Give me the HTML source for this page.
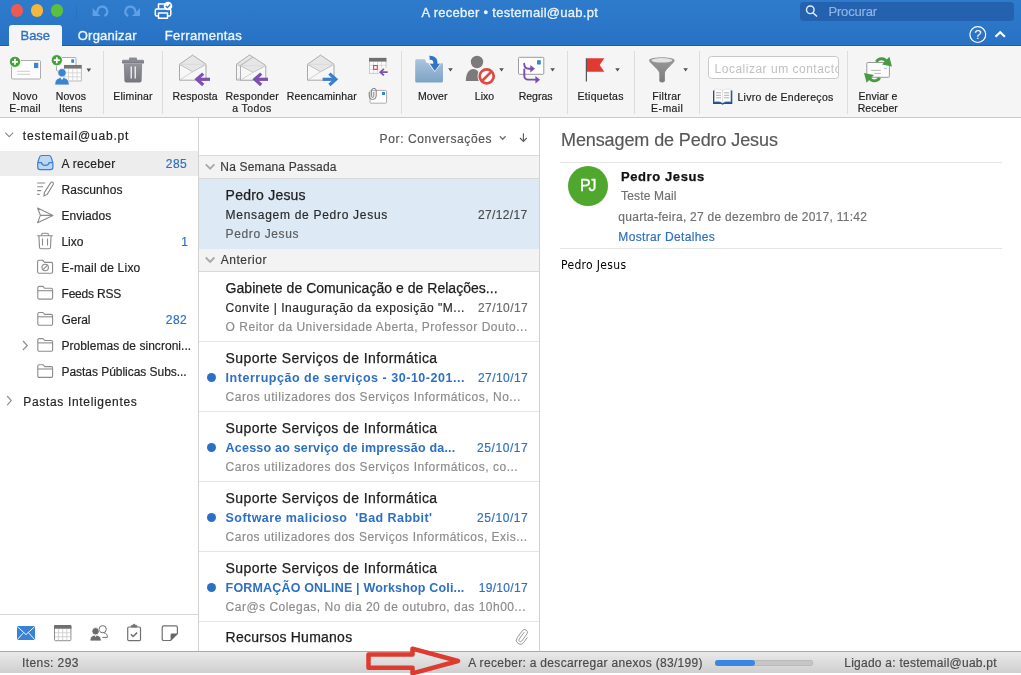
<!DOCTYPE html>
<html><head><meta charset="utf-8">
<style>
*{box-sizing:border-box;margin:0;padding:0}
html,body{width:1021px;height:675px;overflow:hidden;background:#fff}
body{font-family:"Liberation Sans",sans-serif;font-size:13px;color:#222;position:relative}
.abs{position:absolute}
.t{position:absolute;white-space:pre}
#tx{position:absolute;left:0;top:0;width:1021px;height:675px;will-change:transform}
#title{left:0;top:0;width:1021px;height:46px;background:linear-gradient(#2e7bcc,#2872c4);border-bottom:1px solid #1f5ca6}
#ribbon{left:0;top:46px;width:1021px;height:72px;background:#f5f5f5;border-bottom:1px solid #c9c9c9}
.tl{position:absolute;border-radius:50%;width:12.5px;height:12.5px;top:4px}
#tabbase{left:9px;top:25px;width:53px;height:22px;background:#f5f5f5;border-radius:3px 3px 0 0}
.sep{position:absolute;top:51px;width:1px;height:63px;background:#dddddd}
#side{left:0;top:118px;width:199px;height:533px;background:#fff;border-right:1px solid #d2d2d2}
#list{left:199px;top:118px;width:341px;height:533px;background:#fff;border-right:1px solid #d2d2d2}
.grp{position:absolute;left:199px;width:340px;background:#f3f3f3}
.hl{position:absolute;left:199px;width:340px;height:1px;background:#e5e5e5}
.dot{position:absolute;left:206.5px;width:9px;height:9px;border-radius:50%;background:#2c70c6}
#status{left:0;top:651px;width:1021px;height:22px;background:linear-gradient(#e9e9e9,#cfcfcf);border-top:1px solid #a8a8a8}
</style></head><body>
<div id="title" class="abs">
 <div class="tl" style="left:10.8px;background:#ee5a52"></div>
 <div class="tl" style="left:30.8px;background:#f5b73b"></div>
 <div class="tl" style="left:50.8px;background:#5bc13a"></div>
 <div class="abs" style="left:800px;top:1.5px;width:214px;height:19.5px;background:#2462b0;border-radius:3.5px"></div>
 <div id="tabbase" class="abs"></div>
</div>
<div id="ribbon" class="abs"></div>
<div class="sep" style="left:103px"></div><div class="sep" style="left:162px"></div><div class="sep" style="left:401px"></div><div class="sep" style="left:567px"></div><div class="sep" style="left:634px"></div><div class="sep" style="left:699px"></div><div class="sep" style="left:847px"></div>
<div class="abs" style="left:708px;top:55.5px;width:130.5px;height:23px;border:1px solid #c9c9c9;border-radius:3.5px;background:#fff"></div>
<div id="side" class="abs"></div>
<div id="list" class="abs"></div>
<div class="abs" style="left:0;top:150.5px;width:198px;height:25.5px;background:#ededed"></div>
<div class="abs" style="left:0;top:614px;width:198px;height:1px;background:#d6d6d6"></div>
<!-- list structure -->
<div class="hl" style="top:155px;background:#d9d9d9"></div>
<div class="grp" style="top:156px;height:22px"></div>
<div class="hl" style="top:178px;background:#d9d9d9"></div>
<div class="abs" style="left:199px;top:179px;width:340px;height:69.500px;background:#ddeaf6"></div>
<div class="grp" style="top:249px;height:22.500px"></div>
<div class="hl" style="top:271px;background:#d9d9d9"></div>
<div class="hl" style="top:341px"></div><div class="hl" style="top:411px"></div><div class="hl" style="top:481px"></div><div class="hl" style="top:551px"></div><div class="hl" style="top:621px"></div>
<div class="dot" style="top:373px"></div><div class="dot" style="top:443px"></div><div class="dot" style="top:513px"></div><div class="dot" style="top:583px"></div>
<!-- reading pane -->
<div class="abs" style="left:560px;top:162px;width:442px;height:1px;background:#e4e4e4"></div>
<div class="abs" style="left:560px;top:248px;width:442px;height:1px;background:#e4e4e4"></div>
<div class="abs" style="left:567.600px;top:165.700px;width:40.600px;height:40.600px;border-radius:50%;background:#4fa72d"></div>
<div id="status" class="abs">
 <div class="abs" style="left:715px;top:7.500px;width:98px;height:6px;border-radius:3px;background:#c6c6c6;box-shadow:inset 0 0 0 0.5px #b0b0b0"></div>
 <div class="abs" style="left:715px;top:7.500px;width:40px;height:6px;border-radius:3px;background:#3b86e2"></div>
</div>
<svg class="abs" style="left:0;top:0" width="1021" height="118" viewBox="0 0 1021 118">
<defs>
 <linearGradient id="gTrash" x1="0" y1="0" x2="0" y2="1"><stop offset="0" stop-color="#94949c"/><stop offset="1" stop-color="#76767e"/></linearGradient>
 <linearGradient id="gFold" x1="0" y1="0" x2="0" y2="1"><stop offset="0" stop-color="#a9c4de"/><stop offset="1" stop-color="#7da2c6"/></linearGradient>
 <linearGradient id="gFun" x1="0" y1="0" x2="0" y2="1"><stop offset="0" stop-color="#9a9a9a"/><stop offset="1" stop-color="#7c7c7c"/></linearGradient>
 <g id="envopen">
  <path d="M0.5 9.2 L13.6 0 L27 9.2 V25 H0.5 Z" fill="#f7f7f7" stroke="#a8a8a8" stroke-width="1" stroke-linejoin="round"/>
  <path d="M0.5 9.2 L13.6 0 L27 9.2 L13.6 16.5 Z" fill="#e6e6e6" stroke="#b4b4b4" stroke-width="0.8" stroke-linejoin="round"/>
  <path d="M0.5 9.2 H27" stroke="#d6d6d6" stroke-width="0.7"/>
  <path d="M0.8 24.8 L13.6 16.5" stroke="#c4c4c4" stroke-width="0.8"/>
 </g>
 <g id="arrL"><path d="M15 6.3 H2.5" stroke-width="3.2" fill="none"/><path d="M8.2 0.6 L1.8 6.3 L8.2 12" stroke-width="3.2" fill="none" stroke-linejoin="miter"/></g>
 <path id="dd" d="M0 0 h4.6 l-2.3 3.4 z" fill="#505050"/>
</defs>
<!-- title bar icons -->
<g fill="none" stroke="#5e9fe6" stroke-width="2.3">
 <path d="M104.4 15.9 A4.9 4.9 0 1 0 97.4 11.5 L96.5 13"/>
 <path d="M128.2 15.9 A4.9 4.9 0 1 1 135.2 11.5 L136.1 13"/>
</g>
<path d="M92.6 8.1 V16 H100.5 z" fill="#5e9fe6"/>
<path d="M140 8.1 V16 H132.1 z" fill="#5e9fe6"/>
<path d="M76.5 6 v13" stroke="#2a6dc0" stroke-width="0.8"/>
<!-- printer -->
<g fill="none" stroke="#fff" stroke-width="1.5" stroke-linejoin="round">
 <path d="M158.5 9 V4 h7"/>
 <rect x="155.3" y="9" width="15.5" height="7" rx="1.5"/>
 <rect x="158.5" y="13" width="9" height="5.3" fill="#2c74cb"/>
</g>
<circle cx="168" cy="6" r="4.3" fill="#fff"/>
<path d="M165.8 6 l1.6 1.7 l2.9 -3.2" fill="none" stroke="#2c74cb" stroke-width="1.2"/>
<!-- search -->
<circle cx="810.3" cy="9.8" r="3.8" fill="none" stroke="#e4eefa" stroke-width="1.4"/>
<path d="M813 12.7 l4 3.8" stroke="#e4eefa" stroke-width="1.5"/>
<!-- help / caret -->
<circle cx="977.8" cy="34.6" r="7.9" fill="none" stroke="#fff" stroke-width="1.2"/>
<text x="977.8" y="39.3" font-family="Liberation Sans, sans-serif" font-size="13" fill="#fff" text-anchor="middle">?</text>
<path d="M995.5 36.8 l4.7 -4.6 l4.7 4.6" fill="none" stroke="#fff" stroke-width="2.2"/>

<!-- Novo E-mail -->
<rect x="11.5" y="60.5" width="29" height="18.5" rx="1" fill="#fdfdfd" stroke="#adadad"/>
<rect x="34" y="62.8" width="4.3" height="5.3" fill="#3d85d2"/>
<path d="M17 71.3 h13 M17 74.3 h13" stroke="#c6c6c6" stroke-width="0.9"/>
<circle cx="15" cy="61.8" r="5.6" fill="#46a03e" stroke="#fff" stroke-width="0.8"/>
<path d="M12 61.8 h6 M15 58.8 v6" stroke="#fff" stroke-width="1.7"/>
<!-- Novos Itens -->
<rect x="56.5" y="57.5" width="19.5" height="13.5" rx="1" fill="#fdfdfd" stroke="#adadad"/>
<rect x="71.3" y="59.3" width="2.8" height="3.5" fill="#3d85d2"/>
<rect x="64.3" y="65.3" width="17" height="15.7" fill="#fdfdfd" stroke="#adadad" stroke-width="0.8"/>
<rect x="64" y="65" width="17.6" height="3.6" fill="#767676"/>
<path d="M68.5 69 v12 M72.8 69 v12 M77 69 v12 M64.5 72.8 h16.5 M64.5 76.8 h16.5" stroke="#cfcfcf" stroke-width="0.8"/>
<circle cx="62" cy="72.8" r="4.2" fill="#3b83d3" stroke="#f5f5f5" stroke-width="0.8"/>
<path d="M54.8 85 c0 -5.5 3 -7.5 7.2 -7.5 s7.2 2 7.2 7.5 z" fill="#3b83d3" stroke="#f5f5f5" stroke-width="0.8"/>
<path d="M60.5 77.8 l1.5 2.2 l1.5 -2.2 z" fill="#fff"/>
<circle cx="56.8" cy="60.2" r="5.6" fill="#46a03e" stroke="#fff" stroke-width="0.8"/>
<path d="M53.8 60.2 h6 M56.8 57.2 v6" stroke="#fff" stroke-width="1.7"/>
<use href="#dd" x="86.5" y="68.5"/>
<!-- Eliminar -->
<rect x="129" y="57.4" width="8" height="3.5" rx="1" fill="url(#gTrash)"/>
<rect x="122" y="59.8" width="22" height="3.8" rx="1.2" fill="url(#gTrash)"/>
<path d="M123.8 63.5 h18.4 l-0.6 17.3 a1.8 1.8 0 0 1 -1.8 1.6 h-13.6 a1.8 1.8 0 0 1 -1.8 -1.6 z" fill="url(#gTrash)"/>
<path d="M131.2 66.5 v12 M135.2 66.5 v12" stroke="#fff" stroke-width="1.2"/>
<!-- Resposta -->
<use href="#envopen" x="179" y="55.2"/>
<use href="#arrL" x="195" y="73" stroke="#7e50b2"/>
<!-- Responder a Todos -->
<use href="#envopen" x="236" y="55" transform="translate(0 0)"/>
<g transform="translate(240 57.2) scale(0.955 0.920)"><use href="#envopen"/></g>
<use href="#arrL" x="253" y="73" stroke="#7e50b2"/>
<!-- Reencaminhar -->
<use href="#envopen" x="307" y="55.2"/>
<g transform="translate(337.6 73) scale(-1 1)" stroke="#3b80cc"><use href="#arrL"/></g>
<!-- small calendar -->
<rect x="369.4" y="58.3" width="16.6" height="15" fill="#fdfdfd" stroke="#bdbdbd" stroke-width="0.8"/>
<rect x="369" y="57.9" width="17.4" height="3.7" fill="#707070"/>
<path d="M373.3 62 v11 M377.5 62 v11 M381.7 62 v11 M369.5 65.3 h16.4 M369.5 69.4 h16.4" stroke="#d0d0d0" stroke-width="0.8"/>
<rect x="373.6" y="65.6" width="3.7" height="3.7" fill="#fff" stroke="#d9453c" stroke-width="1.1"/>
<circle cx="383.5" cy="72" r="4.8" fill="#f5f5f5"/>
<g transform="translate(379.3 68.6) scale(0.560)" stroke="#7e50b2"><use href="#arrL"/></g>
<!-- attach -->
<rect x="370" y="90.4" width="16.6" height="12.8" rx="1" fill="#fdfdfd" stroke="#adadad"/>
<rect x="382" y="92" width="3" height="3" fill="#3d85d2"/>
<path d="M373.8 91.8 V96.3 a1.1 1.1 0 0 1 -2.2 0 V90.6 a2.3 2.3 0 0 1 4.6 0 V96 a3.5 3.5 0 0 1 -7 0 V92" fill="none" stroke="#747474" stroke-width="0.9"/>
<!-- Mover -->
<path d="M415.2 61 a1.6 1.6 0 0 1 1.6 -1.7 h8 l1.7 3.7 h15 a1.5 1.5 0 0 1 1.5 1.5 v16.5 a1.6 1.6 0 0 1 -1.6 1.6 h-24.6 a1.6 1.6 0 0 1 -1.6 -1.6 z" fill="url(#gFold)"/>
<path d="M429.6 57.8 c5 -0.4 6.2 2.8 5.8 6.8" fill="none" stroke="#f5f5f5" stroke-width="6.2"/>
<path d="M428.2 63.3 h13 l-6.5 8.8 z" fill="#f5f5f5"/>
<path d="M429.6 57.8 c5 -0.4 6.2 2.8 5.8 6.8" fill="none" stroke="#2f74c6" stroke-width="4.2"/>
<path d="M429.8 63.8 h10.2 l-5.2 7.2 z" fill="#2f74c6"/>
<use href="#dd" x="448.2" y="68.2"/>
<!-- Lixo -->
<circle cx="477" cy="62" r="6.2" fill="#7b7b7b"/>
<path d="M465.8 81 c0 -8 3.5 -12 7.5 -12 s7.3 4 7.3 12 z" fill="#7b7b7b"/>
<circle cx="486.7" cy="76.3" r="9.2" fill="#f5f5f5"/>
<circle cx="486.7" cy="76.3" r="7" fill="#fff" stroke="#df4a43" stroke-width="2.7"/>
<path d="M481.8 81.2 l9.8 -9.8" stroke="#df4a43" stroke-width="2.7"/>
<use href="#dd" x="499.2" y="68.2"/>
<!-- Regras -->
<rect x="518.5" y="57.3" width="25.3" height="17" rx="1" fill="#fdfdfd" stroke="#9c9c9c"/>
<rect x="537" y="60.2" width="3.8" height="4.3" fill="#3d85d2"/>
<g fill="none" stroke="#7a4fae" stroke-width="1.9" stroke-linecap="round">
 <path d="M524.2 63.8 c0 3.2 1.6 4.9 4.6 4.9 h2"/>
 <path d="M524.3 69.5 v6.4 a3.7 3.7 0 0 0 3.7 3.7 h8"/>
</g>
<path d="M530.3 65 l4.7 3.8 l-4.7 3.8 z M535.4 75.9 l4.7 3.8 l-4.7 3.8 z" fill="#7a4fae"/>
<use href="#dd" x="550.3" y="68.2"/>
<!-- Etiquetas -->
<path d="M586.4 58.2 v23.3" stroke="#555" stroke-width="1.2"/>
<path d="M587 58.3 h17.3 l-4.6 6.7 l4.6 6.8 h-17.3 z" fill="#e13a33"/>
<use href="#dd" x="615.2" y="68.2"/>
<!-- Filtrar -->
<path d="M649 60.5 c0 -4.4 25.7 -4.4 25.7 0 c0 2 -9.8 9.5 -9.8 12.5 v7.8 a2.8 1.6 0 0 1 -5.6 0 v-7.8 c0 -3 -10.3 -10.5 -10.3 -12.5 z" fill="url(#gFun)"/>
<ellipse cx="661.9" cy="60.3" rx="10.5" ry="2.3" fill="#e2e2e2"/>
<use href="#dd" x="683.3" y="68.2"/>
<!-- Livro -->
<path d="M713 90.5 h19.3 v13.5 h-8.2 l-1.5 0.8 l-1.5 -0.8 h-8.1 z" fill="#1f4f8f"/>
<path d="M714.5 89.3 c3 -0.6 6 -0.3 8.1 1.3 c2.1 -1.6 5.1 -1.9 8.1 -1.3 v12.5 c-3 -0.5 -6 -0.3 -8.1 1.2 c-2.1 -1.5 -5.1 -1.7 -8.1 -1.2 z" fill="#fff" stroke="#d0d0d0" stroke-width="0.5"/>
<path d="M716 92.8 h5 M716 95.3 h5 M716 97.8 h5 M724.2 92.8 h5 M724.2 95.3 h5 M724.2 97.8 h5" stroke="#9a9a9a" stroke-width="0.8"/>
<path d="M722.6 90.6 v12.4" stroke="#c8c8c8" stroke-width="0.6"/>
<!-- Enviar e Receber -->
<rect x="866.8" y="62.5" width="22.6" height="14.8" rx="0.8" fill="#fdfdfd" stroke="#9a9a9a"/>
<path d="M871 70.4 h9.8 M874.3 73.4 h6.7" stroke="#b0b0b0" stroke-width="0.9"/>
<path d="M884 68.4 h3" stroke="#9bbbe0" stroke-width="0.9"/>
<g fill="none" stroke="#4a9a45" stroke-width="2.9">
 <path d="M876.3 61.8 c2.5 -4.2 8.5 -4.2 10.8 0.6"/>
 <path d="M879.7 77.8 c-2.5 4.2 -8.5 4.2 -10.8 -0.6"/>
</g>
<path d="M889.4 56.8 L892 66.6 L882 64.5 Z" fill="#4a9a45"/>
<path d="M866.6 82.8 L864 73 L874 75.1 Z" fill="#4a9a45"/>
</svg>

<svg class="abs" style="left:0;top:118px" width="540" height="533" viewBox="0 118 540 533">
<defs>
 <g id="fold" fill="none" stroke="#8d8d8d" stroke-width="1.1" stroke-linejoin="round">
  <path d="M0.6 2 a1.4 1.4 0 0 1 1.4 -1.4 h3.8 l1.7 1.9 h6.5 a1.4 1.4 0 0 1 1.4 1.4 v8 a1.4 1.4 0 0 1 -1.4 1.4 h-12 a1.4 1.4 0 0 1 -1.4 -1.4 z"/>
  <path d="M0.6 4.9 h14.8"/>
 </g>
</defs>
<g fill="none" stroke="#8e8e8e" stroke-width="1.2">
 <path d="M5.2 132.6 l4 4 l4 -4"/>
 <path d="M23 341 l4.3 4.5 l-4.3 4.5"/>
 <path d="M7.2 396 l4 4.6 l-4 4.6"/>
</g>
<!-- inbox -->
<path d="M37.7 163 l1.7 -5.6 a2.6 2.6 0 0 1 2.5 -1.9 h6.8 a2.6 2.6 0 0 1 2.5 1.9 l1.7 5.6 v4.3 a2.4 2.4 0 0 1 -2.4 2.4 h-10.4 a2.4 2.4 0 0 1 -2.4 -2.4 z" fill="#bfd6f1" stroke="#3a7fd6" stroke-width="1.2" stroke-linejoin="round"/>
<path d="M37.9 162.6 h3.6 c0.6 3.6 7 3.6 7.6 0 h3.6" fill="none" stroke="#3a7fd6" stroke-width="1.2"/>
<!-- drafts -->
<g fill="none" stroke="#8a8a8a" stroke-width="1.1">
 <path d="M37.2 183 h8 M37.2 186.8 h6 M37.2 190.6 h4 M37.2 194.4 h2.5"/>
 <path d="M50.6 182.9 a1.5 1.5 0 0 1 2.6 1.5 l-6 10 l-3.3 1.4 l0.5 -3.4 z"/>
</g>
<!-- sent -->
<path d="M37.6 208 L53 215.4 L37.6 222.7 L40.4 215.4 Z M40.4 215.4 H52" fill="none" stroke="#8a8a8a" stroke-width="1.1" stroke-linejoin="round"/>
<!-- trash -->
<g fill="none" stroke="#8a8a8a" stroke-width="1.1" stroke-linejoin="round">
 <path d="M37.2 235.7 h15.6 M41.7 235.7 v-1.5 a1 1 0 0 1 1 -1 h4.6 a1 1 0 0 1 1 1 v1.5"/>
 <path d="M38.9 235.7 l0.6 11.6 a1.5 1.5 0 0 0 1.5 1.4 h8 a1.5 1.5 0 0 0 1.5 -1.4 l0.6 -11.6"/>
 <path d="M42.5 238.5 v7 M47.5 238.5 v7"/>
</g>
<!-- junk -->
<g fill="none" stroke="#8a8a8a" stroke-width="1.1" stroke-linejoin="round">
 <path d="M37.6 261.7 a1.4 1.4 0 0 1 1.4 -1.4 h3.8 l1.7 2.1 h6.7 a1.4 1.4 0 0 1 1.4 1.4 v8 a1.4 1.4 0 0 1 -1.4 1.4 h-12.2 a1.4 1.4 0 0 1 -1.4 -1.4 z"/>
 <circle cx="45.2" cy="267.5" r="3.2"/><path d="M43 269.7 l4.4 -4.4"/>
</g>
<use href="#fold" x="37.2" y="285.8"/>
<use href="#fold" x="37.2" y="311.9"/>
<use href="#fold" x="37.2" y="338"/>
<use href="#fold" x="37.2" y="364.1"/>
<!-- bottom nav -->
<rect x="17" y="626" width="18" height="14" rx="1.2" fill="#3a82d3"/>
<path d="M17.3 626.6 L26 634.6 L34.7 626.6 M17.3 639.6 L23.6 632.6 M34.7 639.6 L28.4 632.6" fill="none" stroke="#fff" stroke-width="0.9"/>
<rect x="54.5" y="625.5" width="16.4" height="15.2" rx="1" fill="#fff" stroke="#8c8c8c" stroke-width="1"/>
<path d="M54 626 a1 1 0 0 1 1 -1 h15.4 a1 1 0 0 1 1 1 v2.8 h-17.4 z" fill="#707070"/>
<path d="M58.6 629 v11.5 M62.7 629 v11.5 M66.8 629 v11.5 M55 632.8 h15.4 M55 636.7 h15.4" stroke="#cdcdcd" stroke-width="0.9"/>
<g fill="none" stroke="#707070" stroke-width="1">
 <circle cx="102.7" cy="629.2" r="3.6"/>
 <path d="M103.8 632.8 c2.5 0.3 3.6 1.7 3.6 4.6 h-5"/>
</g>
<circle cx="95.6" cy="631.3" r="3.7" fill="#6c6c6c" stroke="#fff" stroke-width="0.8"/>
<path d="M90 641 c0 -4.3 2.3 -5.8 5.6 -5.8 s5.6 1.5 5.6 5.8 z" fill="#6c6c6c" stroke="#fff" stroke-width="0.8"/>
<path d="M94.4 635.4 l1.2 1.7 l1.2 -1.7 z" fill="#fff"/>
<g fill="none" stroke="#707070" stroke-width="1.2" stroke-linejoin="round">
 <rect x="127.7" y="627" width="12.8" height="13.6" rx="1.2"/>
 <path d="M131.4 627 v-1.6 h1.5 a1.2 1.2 0 0 1 2.4 0 h1.5 v1.6 z" fill="#707070" stroke-width="0.8"/>
 <path d="M130.9 634.3 l2.2 2.2 l4 -3.9" stroke-width="1.5"/>
</g>
<path d="M163.8 625.9 h12 a1.6 1.6 0 0 1 1.6 1.6 v6.3 l-6.8 6.7 h-6.8 a1.6 1.6 0 0 1 -1.6 -1.6 v-11.4 a1.6 1.6 0 0 1 1.6 -1.6 z" fill="#fff" stroke="#707070" stroke-width="1.2"/>
<path d="M177.4 633.6 h-5.4 a1.4 1.4 0 0 0 -1.4 1.4 v5.5 z" fill="#666"/>
<!-- list header arrows -->
<path d="M499.8 136.2 l2.9 3 l2.9 -3" fill="none" stroke="#6e6e6e" stroke-width="1.3"/>
<path d="M523.4 133.2 v8 M520 138 l3.4 3.5 l3.4 -3.5" fill="none" stroke="#5a5a5a" stroke-width="1.1"/>
<g fill="none" stroke="#a8a8a8" stroke-width="1.8">
 <path d="M205.8 164.3 l4.3 4.4 l4.3 -4.4"/>
 <path d="M205.8 257.5 l4.3 4.4 l4.3 -4.4"/>
</g>
<!-- paperclip -->
<path d="M524 632.5 l-4.8 6.6 a1.6 1.6 0 0 0 2.6 1.9 l5.2 -7.2 a2.8 2.8 0 0 0 -4.5 -3.3 l-5.4 7.4 a4 4 0 0 0 6.5 4.7 l3.6 -5" fill="none" stroke="#9a9a9a" stroke-width="1" stroke-linecap="round"/>
</svg>

<div id="tx">
<div class="t" style="left:421.5px;top:4.0px;font-size:13px;line-height:17px;color:#edf3fb;letter-spacing:0.28px;-webkit-text-stroke:0.3px #edf3fb;">A receber • testemail@uab.pt</div>
<div class="t" style="left:828.4px;top:3.0px;font-size:13px;line-height:17px;color:#8fb5e3;letter-spacing:-0.15px;-webkit-text-stroke:0.18px #8fb5e3;">Procurar</div>
<div class="t" style="left:20.6px;top:27.0px;font-size:13px;line-height:17px;color:#2e72c4;letter-spacing:-0.08px;-webkit-text-stroke:0.35px #2e72c4;">Base</div>
<div class="t" style="left:77.8px;top:27.0px;font-size:13px;line-height:17px;color:#eef4fb;letter-spacing:0.20px;-webkit-text-stroke:0.35px #eef4fb;">Organizar</div>
<div class="t" style="left:164.8px;top:27.0px;font-size:13px;line-height:17px;color:#eef4fb;letter-spacing:0.33px;-webkit-text-stroke:0.35px #eef4fb;">Ferramentas</div>
<div class="t" style="left:12.5px;top:89.0px;font-size:10.5px;line-height:14px;color:#1c1c1c;letter-spacing:0.19px;-webkit-text-stroke:0.18px #1c1c1c;">Novo</div>
<div class="t" style="left:9.3px;top:101.0px;font-size:10.5px;line-height:14px;color:#1c1c1c;letter-spacing:0.31px;-webkit-text-stroke:0.18px #1c1c1c;">E-mail</div>
<div class="t" style="left:55.7px;top:89.0px;font-size:10.5px;line-height:14px;color:#1c1c1c;letter-spacing:0.13px;-webkit-text-stroke:0.18px #1c1c1c;">Novos</div>
<div class="t" style="left:58.9px;top:101.0px;font-size:10.5px;line-height:14px;color:#1c1c1c;letter-spacing:0.13px;-webkit-text-stroke:0.18px #1c1c1c;">Itens</div>
<div class="t" style="left:113.3px;top:89.0px;font-size:10.5px;line-height:14px;color:#1c1c1c;letter-spacing:0.18px;-webkit-text-stroke:0.18px #1c1c1c;">Eliminar</div>
<div class="t" style="left:172.5px;top:89.0px;font-size:10.5px;line-height:14px;color:#1c1c1c;letter-spacing:0.12px;-webkit-text-stroke:0.18px #1c1c1c;">Resposta</div>
<div class="t" style="left:225.5px;top:89.0px;font-size:10.5px;line-height:14px;color:#1c1c1c;letter-spacing:0.23px;-webkit-text-stroke:0.18px #1c1c1c;">Responder</div>
<div class="t" style="left:232.3px;top:101.0px;font-size:10.5px;line-height:14px;color:#1c1c1c;letter-spacing:0.38px;-webkit-text-stroke:0.18px #1c1c1c;">a Todos</div>
<div class="t" style="left:286.7px;top:89.0px;font-size:10.5px;line-height:14px;color:#1c1c1c;letter-spacing:0.17px;-webkit-text-stroke:0.18px #1c1c1c;">Reencaminhar</div>
<div class="t" style="left:417.9px;top:89.0px;font-size:10.5px;line-height:14px;color:#1c1c1c;letter-spacing:0.08px;-webkit-text-stroke:0.18px #1c1c1c;">Mover</div>
<div class="t" style="left:474.8px;top:89.0px;font-size:10.5px;line-height:14px;color:#1c1c1c;letter-spacing:0.01px;-webkit-text-stroke:0.18px #1c1c1c;">Lixo</div>
<div class="t" style="left:518.7px;top:89.0px;font-size:10.5px;line-height:14px;color:#1c1c1c;letter-spacing:-0.01px;-webkit-text-stroke:0.18px #1c1c1c;">Regras</div>
<div class="t" style="left:577.6px;top:89.0px;font-size:10.5px;line-height:14px;color:#1c1c1c;letter-spacing:0.26px;-webkit-text-stroke:0.18px #1c1c1c;">Etiquetas</div>
<div class="t" style="left:652.3px;top:89.0px;font-size:10.5px;line-height:14px;color:#1c1c1c;letter-spacing:0.29px;-webkit-text-stroke:0.18px #1c1c1c;">Filtrar</div>
<div class="t" style="left:651.1px;top:101.0px;font-size:10.5px;line-height:14px;color:#1c1c1c;letter-spacing:0.41px;-webkit-text-stroke:0.18px #1c1c1c;">E-mail</div>
<div class="t" style="left:737.4px;top:90.0px;font-size:10.5px;line-height:14px;color:#1c1c1c;letter-spacing:0.32px;-webkit-text-stroke:0.18px #1c1c1c;">Livro de Endereços</div>
<div class="t" style="left:858.5px;top:89.0px;font-size:10.5px;line-height:14px;color:#1c1c1c;letter-spacing:0.05px;-webkit-text-stroke:0.18px #1c1c1c;">Enviar e</div>
<div class="t" style="left:857.7px;top:101.0px;font-size:10.5px;line-height:14px;color:#1c1c1c;letter-spacing:0.08px;-webkit-text-stroke:0.18px #1c1c1c;">Receber</div>
<div class="t" style="left:22.8px;top:128.0px;font-size:12px;line-height:16px;color:#242424;letter-spacing:0.80px;-webkit-text-stroke:0.18px #242424;">testemail@uab.pt</div>
<div class="t" style="left:61.5px;top:156.0px;font-size:12px;line-height:16px;color:#242424;letter-spacing:0.30px;-webkit-text-stroke:0.18px #242424;">A receber</div>
<div class="t" style="left:61.5px;top:182.0px;font-size:12px;line-height:16px;color:#242424;letter-spacing:0.11px;-webkit-text-stroke:0.18px #242424;">Rascunhos</div>
<div class="t" style="left:61.5px;top:208.0px;font-size:12px;line-height:16px;color:#242424;letter-spacing:0.06px;-webkit-text-stroke:0.18px #242424;">Enviados</div>
<div class="t" style="left:61.5px;top:234.0px;font-size:12px;line-height:16px;color:#242424;letter-spacing:-0.07px;-webkit-text-stroke:0.18px #242424;">Lixo</div>
<div class="t" style="left:61.5px;top:260.0px;font-size:12px;line-height:16px;color:#242424;letter-spacing:0.21px;-webkit-text-stroke:0.18px #242424;">E-mail de Lixo</div>
<div class="t" style="left:61.5px;top:286.0px;font-size:12px;line-height:16px;color:#242424;letter-spacing:-0.19px;-webkit-text-stroke:0.18px #242424;">Feeds RSS</div>
<div class="t" style="left:61.5px;top:312.0px;font-size:12px;line-height:16px;color:#242424;letter-spacing:-0.11px;-webkit-text-stroke:0.18px #242424;">Geral</div>
<div class="t" style="left:61.5px;top:338.0px;font-size:12px;line-height:16px;color:#242424;letter-spacing:0.04px;-webkit-text-stroke:0.18px #242424;">Problemas de sincroni...</div>
<div class="t" style="left:61.5px;top:364.0px;font-size:12px;line-height:16px;color:#242424;letter-spacing:-0.04px;-webkit-text-stroke:0.18px #242424;">Pastas Públicas Subs...</div>
<div class="t" style="left:165.8px;top:156.0px;font-size:12px;line-height:16px;color:#2d6fc0;letter-spacing:0.43px;-webkit-text-stroke:0.18px #2d6fc0;">285</div>
<div class="t" style="left:181.2px;top:234.0px;font-size:12px;line-height:16px;color:#2d6fc0;letter-spacing:0.00px;-webkit-text-stroke:0.18px #2d6fc0;">1</div>
<div class="t" style="left:165.8px;top:312.0px;font-size:12px;line-height:16px;color:#2d6fc0;letter-spacing:0.43px;-webkit-text-stroke:0.18px #2d6fc0;">282</div>
<div class="t" style="left:23.3px;top:394.0px;font-size:12px;line-height:16px;color:#242424;letter-spacing:0.67px;-webkit-text-stroke:0.18px #242424;">Pastas Inteligentes</div>
<div class="t" style="left:379.6px;top:131.0px;font-size:12px;line-height:16px;color:#565656;letter-spacing:0.62px;-webkit-text-stroke:0.18px #565656;">Por: Conversações</div>
<div class="t" style="left:220.3px;top:159.0px;font-size:12px;line-height:16px;color:#3a3a3a;letter-spacing:0.17px;-webkit-text-stroke:0.18px #3a3a3a;">Na Semana Passada</div>
<div class="t" style="left:220.7px;top:252.0px;font-size:12px;line-height:16px;color:#3a3a3a;letter-spacing:0.54px;-webkit-text-stroke:0.18px #3a3a3a;">Anterior</div>
<div class="t" style="left:225.6px;top:186.0px;font-size:14px;line-height:18px;color:#1d1d1d;letter-spacing:0.22px;-webkit-text-stroke:0.25px #1d1d1d;">Pedro Jesus</div>
<div class="t" style="left:225.6px;top:207.0px;font-size:12px;line-height:16px;color:#2a2a2a;letter-spacing:0.71px;-webkit-text-stroke:0.18px #2a2a2a;">Mensagem de Pedro Jesus</div>
<div class="t" style="left:478.0px;top:207.0px;font-size:12px;line-height:16px;color:#4a4a4a;letter-spacing:0.35px;-webkit-text-stroke:0.18px #4a4a4a;">27/12/17</div>
<div class="t" style="left:225.6px;top:226.0px;font-size:12px;line-height:16px;color:#5c5c5c;letter-spacing:0.62px;-webkit-text-stroke:0.18px #5c5c5c;">Pedro Jesus</div>
<div class="t" style="left:225.6px;top:279.0px;font-size:14px;line-height:18px;color:#1d1d1d;letter-spacing:0.03px;-webkit-text-stroke:0.25px #1d1d1d;">Gabinete de Comunicação e de Relações...</div>
<div class="t" style="left:225.6px;top:300.0px;font-size:12px;line-height:16px;color:#2a2a2a;letter-spacing:0.51px;-webkit-text-stroke:0.18px #2a2a2a;">Convite | Inauguração da exposição &quot;M...</div>
<div class="t" style="left:478.0px;top:300.0px;font-size:12px;line-height:16px;color:#6a6a6a;letter-spacing:0.43px;-webkit-text-stroke:0.18px #6a6a6a;">27/10/17</div>
<div class="t" style="left:225.6px;top:319.0px;font-size:12px;line-height:16px;color:#8c8c8c;letter-spacing:0.51px;-webkit-text-stroke:0.18px #8c8c8c;">O Reitor da Universidade Aberta, Professor Douto...</div>
<div class="t" style="left:225.6px;top:349.0px;font-size:14px;line-height:18px;color:#1d1d1d;letter-spacing:0.41px;-webkit-text-stroke:0.25px #1d1d1d;">Suporte Serviços de Informática</div>
<div class="t" style="left:225.6px;top:370.0px;font-size:12.5px;line-height:16px;color:#2c70c6;letter-spacing:0.52px;font-weight:bold;">Interrupção de serviços - 30-10-201...</div>
<div class="t" style="left:478.0px;top:370.0px;font-size:12px;line-height:16px;color:#2c70c6;letter-spacing:0.43px;-webkit-text-stroke:0.18px #2c70c6;">27/10/17</div>
<div class="t" style="left:225.6px;top:389.0px;font-size:12px;line-height:16px;color:#8c8c8c;letter-spacing:0.52px;-webkit-text-stroke:0.18px #8c8c8c;">Caros utilizadores dos Serviços Informáticos, No...</div>
<div class="t" style="left:225.6px;top:419.0px;font-size:14px;line-height:18px;color:#1d1d1d;letter-spacing:0.41px;-webkit-text-stroke:0.25px #1d1d1d;">Suporte Serviços de Informática</div>
<div class="t" style="left:225.6px;top:440.0px;font-size:12.5px;line-height:16px;color:#2c70c6;letter-spacing:0.21px;font-weight:bold;">Acesso ao serviço de impressão da...</div>
<div class="t" style="left:477.0px;top:440.0px;font-size:12px;line-height:16px;color:#2c70c6;letter-spacing:0.57px;-webkit-text-stroke:0.18px #2c70c6;">25/10/17</div>
<div class="t" style="left:225.6px;top:459.0px;font-size:12px;line-height:16px;color:#8c8c8c;letter-spacing:0.52px;-webkit-text-stroke:0.18px #8c8c8c;">Caros utilizadores dos Serviços Informáticos, co...</div>
<div class="t" style="left:225.6px;top:489.0px;font-size:14px;line-height:18px;color:#1d1d1d;letter-spacing:0.41px;-webkit-text-stroke:0.25px #1d1d1d;">Suporte Serviços de Informática</div>
<div class="t" style="left:225.6px;top:510.0px;font-size:12.5px;line-height:16px;color:#2c70c6;letter-spacing:0.44px;font-weight:bold;">Software malicioso  &#x27;Bad Rabbit&#x27;</div>
<div class="t" style="left:477.0px;top:510.0px;font-size:12px;line-height:16px;color:#2c70c6;letter-spacing:0.57px;-webkit-text-stroke:0.18px #2c70c6;">25/10/17</div>
<div class="t" style="left:225.6px;top:529.0px;font-size:12px;line-height:16px;color:#8c8c8c;letter-spacing:0.49px;-webkit-text-stroke:0.18px #8c8c8c;">Caros utilizadores dos Serviços Informáticos, Exis...</div>
<div class="t" style="left:225.6px;top:559.0px;font-size:14px;line-height:18px;color:#1d1d1d;letter-spacing:0.41px;-webkit-text-stroke:0.25px #1d1d1d;">Suporte Serviços de Informática</div>
<div class="t" style="left:225.6px;top:580.0px;font-size:12.5px;line-height:16px;color:#2c70c6;letter-spacing:0.17px;font-weight:bold;">FORMAÇÃO ONLINE | Workshop Coli...</div>
<div class="t" style="left:478.7px;top:580.0px;font-size:12px;line-height:16px;color:#2c70c6;letter-spacing:0.33px;-webkit-text-stroke:0.18px #2c70c6;">19/10/17</div>
<div class="t" style="left:225.6px;top:599.0px;font-size:12px;line-height:16px;color:#8c8c8c;letter-spacing:0.49px;-webkit-text-stroke:0.18px #8c8c8c;">Car@s Colegas, No dia 20 de outubro, das 10h00...</div>
<div class="t" style="left:225.6px;top:628.0px;font-size:14px;line-height:18px;color:#1d1d1d;letter-spacing:0.24px;-webkit-text-stroke:0.25px #1d1d1d;">Recursos Humanos</div>
<div class="t" style="left:561.0px;top:129.0px;font-size:18px;line-height:23px;color:#585858;letter-spacing:-0.10px;-webkit-text-stroke:0.18px #585858;">Mensagem de Pedro Jesus</div>
<div class="t" style="left:580.0px;top:175.0px;font-size:16px;line-height:21px;color:#fff;letter-spacing:-2.07px;-webkit-text-stroke:0.3px #fff;">PJ</div>
<div class="t" style="left:621.0px;top:168.0px;font-size:13px;line-height:17px;color:#111;letter-spacing:0.59px;font-weight:bold;-webkit-text-stroke:0.25px #111;">Pedro Jesus</div>
<div class="t" style="left:621.0px;top:188.0px;font-size:12px;line-height:16px;color:#707070;letter-spacing:0.16px;-webkit-text-stroke:0.18px #707070;">Teste Mail</div>
<div class="t" style="left:618.3px;top:209.0px;font-size:12px;line-height:16px;color:#707070;letter-spacing:0.27px;-webkit-text-stroke:0.18px #707070;">quarta-feira, 27 de dezembro de 2017, 11:42</div>
<div class="t" style="left:618.3px;top:229.0px;font-size:12px;line-height:16px;color:#2f6fbd;letter-spacing:0.34px;-webkit-text-stroke:0.18px #2f6fbd;">Mostrar Detalhes</div>
<div class="t" style="left:561.0px;top:257.0px;font-size:12px;line-height:16px;color:#000;letter-spacing:0.33px;font-family:'DejaVu Sans Condensed','DejaVu Sans',sans-serif;">Pedro Jesus</div>
<div class="t" style="left:22.0px;top:655.0px;font-size:12px;line-height:16px;color:#4a4a4a;letter-spacing:0.41px;-webkit-text-stroke:0.18px #4a4a4a;">Itens: 293</div>
<div class="t" style="left:468.3px;top:655.0px;font-size:12px;line-height:16px;color:#4a4a4a;letter-spacing:0.31px;-webkit-text-stroke:0.18px #4a4a4a;">A receber: a descarregar anexos (83/199)</div>
<div class="t" style="left:844.3px;top:655.0px;font-size:12px;line-height:16px;color:#4a4a4a;letter-spacing:0.24px;-webkit-text-stroke:0.18px #4a4a4a;">Ligado a: testemail@uab.pt</div>
<div class="abs" style="left:714.6px;top:60.6px;width:123px;height:16px;overflow:hidden"><div class="t" style="left:0;top:0;font-size:12px;line-height:16px;color:#c0c0c0;letter-spacing:0.5px">Localizar um contacto</div></div>
</div>
<svg class="abs" style="left:340px;top:640px" width="140" height="35" viewBox="340 640 140 35"><path d="M368.5 654.4 H412.5 V648.7 L458 661 L412.5 673.3 V667.7 H368.5 Z" fill="none" stroke="#df3a2e" stroke-width="4.5" stroke-linejoin="round"/></svg>

</body></html>
